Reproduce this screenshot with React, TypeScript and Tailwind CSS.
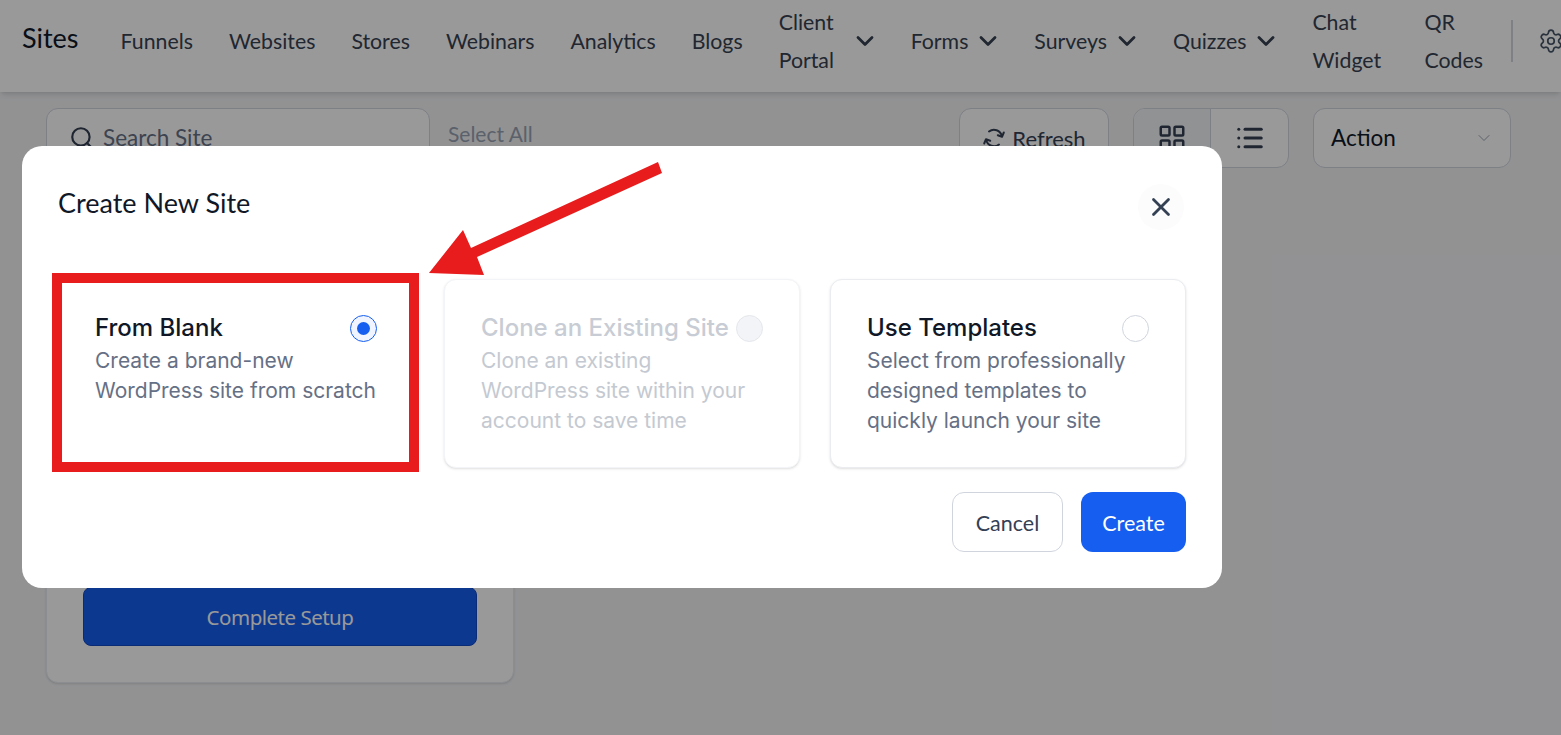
import { ChevronDown, LayoutGrid, List, Search, Settings, X } from 'lucide-react'

const lato = { fontFamily: 'Lato, sans-serif' }

function NavItem({ label, lines, caret, linesWidth }: { label?: string; lines?: string[]; caret?: boolean; linesWidth?: string }) {
  return (
    <div className="flex items-center gap-[6px] shrink-0 text-[#374151]">
      {lines ? (
        <div className={`text-[21.3px] leading-[38px] ${linesWidth}`}>
          {lines.map(l => <div key={l}>{l}</div>)}
        </div>
      ) : (
        <span className="text-[21.3px] leading-[38px]">{label}</span>
      )}
      {caret && <ChevronDown className="w-[28px] h-[28px] -mr-[4px]" strokeWidth={2.4} />}
    </div>
  )
}

function SiteOption({ title, lines, selected, disabled }: { title: string; lines: string[]; selected?: boolean; disabled?: boolean }) {
  return (
    <div className={`flex-1 h-[189px] bg-white rounded-xl border shadow-sm pl-[36px] pr-[36px] pt-[33px] ${disabled ? 'border-[#f2f4f7]' : 'border-[#eaecf0]'}`}>
      <div className="flex items-center justify-between">
        <span className={`text-[24px] leading-[30px] font-medium whitespace-nowrap ${disabled ? 'text-[#c8ccd4]' : 'text-[#101828]'}`}>{title}</span>
        <span className={`w-[27px] h-[27px] rounded-full border shrink-0 flex items-center justify-center ${selected ? 'border-[#155eef] bg-[#eff4ff]' : disabled ? 'border-[#e4e7ec] bg-[#f2f4f7]' : 'border-[#d0d5dd] bg-white'}`}>
          {selected && <span className="w-[13px] h-[13px] rounded-full bg-[#155eef]" />}
        </span>
      </div>
      <div className={`mt-[3px] text-[21px] leading-[30px] whitespace-nowrap ${disabled ? 'text-[#c4c9d1]' : 'text-[#667085]'}`}>
        {lines.map(l => <div key={l}>{l}</div>)}
      </div>
    </div>
  )
}

export default function App() {
  return (
    <div className="relative w-[1561px] h-[735px] overflow-hidden bg-[#f3f4f6]" style={lato}>
      <header className="h-[92px] bg-white shadow-md flex items-center pl-[22px] pb-[11px] overflow-hidden">
        <div className="text-[27px] text-[#101828] mr-[42px] -mt-[5px] shrink-0">Sites</div>
        <nav className="flex items-center gap-[36px]">
          <NavItem label="Funnels" />
          <NavItem label="Websites" />
          <NavItem label="Stores" />
          <NavItem label="Webinars" />
          <NavItem label="Analytics" />
          <NavItem label="Blogs" />
          <NavItem lines={['Client', 'Portal']} caret linesWidth="w-[66px]" />
          <NavItem label="Forms" caret />
          <NavItem label="Surveys" caret />
          <NavItem label="Quizzes" caret />
          <NavItem lines={['Chat', 'Widget']} linesWidth="w-[76px]" />
          <NavItem lines={['QR', 'Codes']} />
        </nav>
        <div className="w-[2px] h-[42px] bg-[#d0d5dd] ml-[28px] shrink-0" />
        <Settings className="w-[26px] h-[26px] ml-[25px] shrink-0 text-[#475467]" strokeWidth={1.6} />
      </header>

      <main className="px-[46px] pt-[16px]">
        <div className="flex items-start">
          <div className="w-[384px] h-[60px] bg-white rounded-xl border border-[#d0d5dd] flex items-center pl-[22px] gap-[8px] text-[22.5px] text-[#667085]">
            <Search className="w-[26px] h-[26px] text-[#344054]" strokeWidth={2} />
            <span className="-mt-[1px]">Search Site</span>
          </div>
          <div className="ml-[18px] mt-[10px] text-[21px] text-[#98a2b3]">Select All</div>
          <div className="ml-auto mr-[4px] flex items-start">
            <div className="w-[150px] h-[60px] bg-white rounded-xl border border-[#d0d5dd] flex items-center justify-center gap-[6px] text-[22px] text-[#344054]">
              <svg width="24" height="24" viewBox="0 0 24 24" fill="none" stroke="currentColor" strokeWidth="2" strokeLinecap="round" strokeLinejoin="round">
                <path d="M7 5.5A8 8 0 0 1 19.8 10" />
                <path d="M21.8 6.5 20 10.8 15.8 9.2" />
                <path d="M17 18.5A8 8 0 0 1 4.2 14" />
                <path d="M2.2 17.5 4 13.2 8.2 14.8" />
              </svg>
              <span className="mt-[1px]">Refresh</span>
            </div>
            <div className="ml-[24px] w-[156px] h-[60px] flex rounded-xl border border-[#d0d5dd] overflow-hidden bg-white">
              <div className="w-[77px] bg-[#f2f4f7] border-r border-[#d0d5dd] flex items-center justify-center">
                <LayoutGrid className="w-[30px] h-[30px] text-[#344054]" strokeWidth={2} />
              </div>
              <div className="flex-1 flex items-center justify-center">
                <List className="w-[30px] h-[30px] text-[#344054]" strokeWidth={2.4} />
              </div>
            </div>
            <div className="ml-[24px] w-[198px] h-[60px] bg-white rounded-xl border border-[#d0d5dd] flex items-center justify-between pl-[17px] pr-[16px] text-[22.5px] text-[#101828]">
              <span>Action</span>
              <ChevronDown className="w-[20px] h-[20px] text-[#98a2b3]" strokeWidth={1.2} />
            </div>
          </div>
        </div>

        <div className="mt-[20px] w-[468px] h-[495px] bg-white rounded-xl border border-[#eaecf0] shadow-sm px-[36px] pt-[458px]" style={{ fontFamily: '"Noto Sans", sans-serif' }}>
          <div className="h-[59px] pt-[2px] rounded-lg bg-[#155eef] border border-[#1149c4] flex items-center justify-center text-[20.5px] text-white -mt-[60px]">
            <span className="tracking-[-0.5px]">Complete Setup</span>
          </div>
        </div>
      </main>

      <div className="absolute inset-0 bg-black/40" />

      <div className="absolute left-[22px] top-[146px] w-[1200px] h-[442px] bg-white rounded-[20px] px-[36px]">
        <div className="flex items-start justify-between h-[133px]">
          <h2 className="mt-[38px] text-[27px] leading-[38px] text-[#101828]">Create New Site</h2>
          <button className="mt-[38px] mr-[2px] w-[46px] h-[46px] rounded-full bg-[#fcfcfd] flex items-center justify-center text-[#344054]">
            <X className="w-[30px] h-[30px]" strokeWidth={2.2} />
          </button>
        </div>
        <div className="flex gap-[30px]" style={{ fontFamily: 'Inter, sans-serif' }}>
          <SiteOption title="From Blank" lines={['Create a brand-new', 'WordPress site from scratch']} selected />
          <SiteOption title="Clone an Existing Site" lines={['Clone an existing', 'WordPress site within your', 'account to save time']} disabled />
          <SiteOption title="Use Templates" lines={['Select from professionally', 'designed templates to', 'quickly launch your site']} />
        </div>
        <div className="flex justify-end gap-[18px] mt-[24px]">
          <button className="w-[111px] h-[60px] pt-[2px] rounded-xl border border-[#d0d5dd] bg-white text-[21.5px] text-[#344054]">Cancel</button>
          <button className="w-[105px] h-[60px] pt-[2px] rounded-xl bg-[#155eef] text-[21.5px] text-white">Create</button>
        </div>
      </div>

      {/* red annotation */}
      <div className="absolute left-[52px] top-[273px] w-[367px] h-[199px] border-[10px] border-[#e81c1c]" />
      <svg className="absolute left-0 top-0 pointer-events-none" width="1561" height="735">
        <polygon fill="#e81c1c" points="658,162 662,173 477,257 484,275 429,273 463,230 471,248" />
      </svg>
    </div>
  )
}
